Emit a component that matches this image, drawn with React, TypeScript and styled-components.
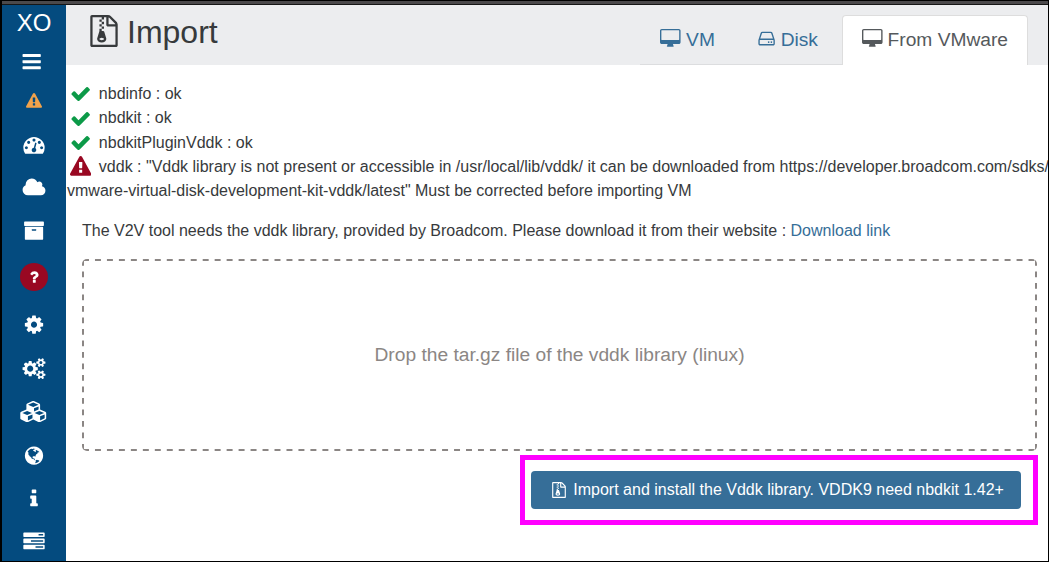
import React from 'react'
import styled, { createGlobalStyle } from 'styled-components'

const GlobalStyle = createGlobalStyle`
  *, *::before, *::after { box-sizing: border-box; }
  html, body { margin: 0; padding: 0; background: #fff; }
  body {
    font-family: "Liberation Sans", Arial, sans-serif;
    font-size: 16px;
    line-height: 24px;
    color: #373a3c;
    overflow: hidden;
  }
`

type Glyph = { w: number; d: string }

const gearSmall =
  'v140q0 16-149 31-12 27-30 52 51 113 51 138 0 4-4 7-122 71-124 71-8 0-46-47t-52-68q-20 2-30 2t-30-2q-14 21-52 68t-46 47q-2 0-124-71-4-3-4-7 0-25 51-138-18-25-30-52-149-15-149-31v-140q0-16 149-31 13-29 30-52-51-113-51-138 0-4 4-7 4-2 35-20t59-34 30-16q8 0 46 46.5t52 67.5q20-2 30-2t30 2q51-71 92-112l6-2q4 0 124 70 4 3 4 7 0 25-51 138 17 23 30 52 149 15 149 31z'

const glyphs: Record<string, Glyph> = {
  bars: {
    w: 1792,
    d: 'M1664 1344v128q0 26-19 45t-45 19h-1408q-26 0-45-19t-19-45v-128q0-26 19-45t45-19h1408q26 0 45 19t19 45zm0-512v128q0 26-19 45t-45 19h-1408q-26 0-45-19t-19-45v-128q0-26 19-45t45-19h1408q26 0 45 19t19 45zm0-512v128q0 26-19 45t-45 19h-1408q-26 0-45-19t-19-45v-128q0-26 19-45t45-19h1408q26 0 45 19t19 45z',
  },
  warning: {
    w: 1792,
    d: 'M1024 1375v-190q0-14-9.5-23.5t-22.5-9.5h-192q-13 0-22.5 9.5t-9.5 23.5v190q0 14 9.5 23.5t22.5 9.5h192q13 0 22.5-9.5t9.5-23.5zm-2-374l18-459q0-12-10-19-13-11-24-11h-220q-11 0-24 11-10 7-10 21l17 457q0 10 10 16.5t24 6.5h185q14 0 23.5-6.5t10.5-16.5zm-14-934l768 1408q35 63-2 126-17 29-46.5 46t-63.5 17h-1536q-34 0-63.5-17t-46.5-46q-37-63-2-126l768-1408q17-31 47-49t65-18 65 18 47 49z',
  },
  dashboard: {
    w: 1792,
    d: 'M384 1152q0-53-37.5-90.5t-90.5-37.5-90.5 37.5-37.5 90.5 37.5 90.5 90.5 37.5 90.5-37.5 37.5-90.5zm192-448q0-53-37.5-90.5t-90.5-37.5-90.5 37.5-37.5 90.5 37.5 90.5 90.5 37.5 90.5-37.5 37.5-90.5zm428 481l101-382q6-26-7.5-48.5t-38.5-29.5-48 6.5-30 39.5l-101 382q-60 5-107 43.5t-63 98.5q-20 77 20 146t117 89 146-20 89-117q16-60-6-117t-72-91zm660-33q0-53-37.5-90.5t-90.5-37.5-90.5 37.5-37.5 90.5 37.5 90.5 90.5 37.5 90.5-37.5 37.5-90.5zm-640-640q0-53-37.5-90.5t-90.5-37.5-90.5 37.5-37.5 90.5 37.5 90.5 90.5 37.5 90.5-37.5 37.5-90.5zm448 192q0-53-37.5-90.5t-90.5-37.5-90.5 37.5-37.5 90.5 37.5 90.5 90.5 37.5 90.5-37.5 37.5-90.5zm320 448q0 261-141 483-19 29-54 29h-1402q-35 0-54-29-141-221-141-483 0-182 71-348t191-286 286-191 348-71 348 71 286 191 191 286 71 348z',
  },
  cloud: {
    w: 1920,
    d: 'M1920 1152q0 159-112.5 271.5t-271.5 112.5h-1088q-185 0-316.5-131.5t-131.5-316.5q0-132 71-241.5t187-163.5q-2-28-2-43 0-212 150-362t362-150q158 0 286.5 88t187.5 230q70-62 166-62 106 0 181 75t75 181q0 75-41 138 129 30 213 134.5t84 239.5z',
  },
  archive: {
    w: 1792,
    d: 'M1088 832q0-26-19-45t-45-19h-256q-26 0-45 19t-19 45 19 45 45 19h256q26 0 45-19t19-45zm576-192v960q0 26-19 45t-45 19h-1408q-26 0-45-19t-19-45v-960q0-26 19-45t45-19h1408q26 0 45 19t19 45zm64-448v256q0 26-19 45t-45 19h-1536q-26 0-45-19t-19-45v-256q0-26 19-45t45-19h1536q26 0 45 19t19 45z',
  },
  question: {
    w: 1792,
    d: 'M1088 1256v240q0 16-12 28t-28 12h-240q-16 0-28-12t-12-28v-240q0-16 12-28t28-12h240q16 0 28 12t12 28zm316-600q0 54-15.5 101t-35 76.5-55 59.5-57.5 43.5-61 35.5q-41 23-68.5 65t-27.5 67q0 17-12 32.5t-28 15.5h-240q-15 0-25.5-18.5t-10.5-37.5v-45q0-83 65-156.5t143-108.5q59-27 84-56t25-76q0-42-46.5-74t-107.5-32q-65 0-108 29-35 25-107 115-13 16-31 16-12 0-25-8l-164-125q-13-10-15.5-25t5.5-28q160-266 464-266 80 0 161 31t146 83 106 127.5 41 158.5z',
  },
  cog: {
    w: 1792,
    d: 'M1152 896q0-106-75-181t-181-75-181 75-75 181 75 181 181 75 181-75 75-181zm512-109v222q0 12-8 23t-20 13l-185 28q-19 54-39 91 35 50 107 138 10 12 10 25t-9 23q-27 37-99 108t-94 71q-12 0-26-9l-138-108q-44 23-91 38-16 136-29 186-7 28-36 28h-222q-14 0-24.5-8.5t-11.5-21.5l-28-184q-49-16-90-37l-141 107q-10 9-25 9-14 0-25-11-126-114-165-168-7-10-7-23 0-12 8-23 15-21 51-66.5t54-70.5q-27-50-41-99l-183-27q-13-2-21-12.5t-8-23.5v-222q0-12 8-23t19-13l186-28q14-46 39-92-40-57-107-138-10-12-10-24 0-10 9-23 26-36 98.5-107.5t94.5-71.5q13 0 26 10l138 107q44-23 91-38 16-136 29-186 7-28 36-28h222q14 0 24.5 8.5t11.5 21.5l28 184q49 16 90 37l142-107q9-9 24-9 13 0 25 10 129 119 165 170 7 8 7 22 0 12-8 23-15 21-51 66.5t-54 70.5q26 50 41 98l183 28q13 2 21 12.5t8 23.5z',
  },
  cogs: {
    w: 1920,
    d:
      'M896 896q0-106-75-181t-181-75-181 75-75 181 75 181 181 75 181-75 75-181zm768 512q0-52-38-90t-90-38-90 38-38 90q0 53 37.5 90.5t90.5 37.5 90.5-37.5 37.5-90.5zm0-1024q0-52-38-90t-90-38-90 38-38 90q0 53 37.5 90.5t90.5 37.5 90.5-37.5 37.5-90.5zm-384 421v185q0 10-7 19.5t-16 10.5l-155 24q-11 35-32 76 34 48 90 115 7 11 7 20 0 12-7 19-23 30-82.5 89.5t-78.5 59.5q-11 0-21-7l-115-90q-37 19-77 31-11 108-23 155-7 24-30 24h-186q-11 0-20-7.5t-10-17.5l-23-153q-34-10-75-31l-118 89q-7 7-20 7-11 0-21-8-144-133-144-160 0-9 7-19 10-14 41-53t47-61q-23-44-35-82l-152-24q-10-1-17-9.5t-7-19.5v-185q0-10 7-19.5t16-10.5l155-24q11-35 32-76-34-48-90-115-7-11-7-20 0-12 7-20 22-30 82-89t79-59q11 0 21 7l115 90q34-18 77-32 11-108 23-154 7-24 30-24h186q11 0 20 7.5t10 17.5l23 153q34 10 75 31l118-89q8-7 20-7 11 0 21 8 144 133 144 160 0 8-7 19-12 16-42 54t-45 60q23 48 34 82l152 23q10 2 17 10.5t7 19.5z' +
      'M1920 1338' + gearSmall + 'M1920 314' + gearSmall,
  },
  cubes: {
    w: 2304,
    d: 'M640 1632l384-192v-314l-384 164v342zm-64-454l404-173-404-173-404 173zm1088 454l384-192v-314l-384 164v342zm-64-454l404-173-404-173-404 173zm-448-293l384-165v-266l-384 164v267zm-64-379l441-189-441-189-441 189zm1088 518v416q0 36-19 67t-52 47l-448 224q-25 14-57 14t-57-14l-448-224q-4-2-7-4-2 2-7 4l-448 224q-25 14-57 14t-57-14l-448-224q-33-16-52-47t-19-67v-416q0-38 21.5-70t56.5-48l434-186v-400q0-38 21.5-70t56.5-48l448-192q23-10 50-10t50 10l448 192q35 16 56.5 48t21.5 70v400l434 186q36 16 57 48t21 70z',
  },
  globe: {
    w: 1792,
    d: 'M896 128q209 0 385.5 103t279.5 279.5 103 385.5-103 385.5-279.5 279.5-385.5 103-385.5-103-279.5-279.5-103-385.5 103-385.5 279.5-279.5 385.5-103zm274 521q-2 1-9.5 9.5t-13.5 9.5q2 0 4.5-5t5-11 3.5-7q6-7 22-15 14-6 52-12 34-8 51 11-2-2 9.5-13t14.5-12q3-2 15-4.5t15-7.5l2-22q-12 1-17.5-7t-6.5-21q0 2-6 8 0-7-4.5-8t-11.5 1-9 1q-10-3-15-7.5t-8-16.5-4-15q-2-5-9.5-11t-9.5-10q-1-2-2.5-5.5t-3-6.5-4-5.5-5.5-2.5-7 5-7.5 10-4.5 5q-3-2-6-1.5t-4.5 1-4.5 3-5 3.5q-3 2-8.5 3t-8.5 2q15-5-1-11-10-4-16-3 9-4 7.5-12t-8.5-14h5q-1-4-8.5-8.5t-17.5-8.5-13-6q-8-5-34-9.5t-33-.5q-5 6-4.5 10.5t4 14 3.5 12.5q1 6-5.5 13t-6.5 12q0 7 14 15.5t10 21.5q-3 8-16 16t-16 12q-5 8-1.5 18.5t10.5 16.5q2 2 1.5 4t-3.5 4.5-5.5 4-6.5 3.5l-3 2q-11 5-20.5-6t-13.5-26q-7-25-16-30-23-8-29 1-5-13-41-26-25-9-58-4 6-1 0-15-7-15-19-12 3-6 4-17.5t1-13.5q3-13 12-23 1-1 7-8.5t9.5-13.5.5-6q35 4 50-11 5-5 11.5-17t10.5-17q9-6 14-5.5t14.5 5.5 14.5 5q14 1 15.5-11t-7.5-20q12 1 3-17-4-7-8-9-12-4-27 5-8 4 2 8-1-1-9.5 10.5t-16.5 17.5-16-5q-1-1-5.5-13.5t-9.5-13.5q-8 0-16 15 3-8-11-15t-24-8q19-12-8-27-7-4-20.5-5t-19.5 4q-5 7-5.5 11.5t5 8 10.5 5.5 11.5 4 8.5 3q14 10 8 14-2 1-8.5 3.5t-11.5 4.5-6 4q-3 4 0 14t-2 14q-5-5-9-17.5t-7-16.5q7 9-25 6l-10-1q-4 0-16 2t-20.5 1-13.5-8q-4-8 0-20 1-4 4-2-4-3-11-9.5t-10-8.5q-46 15-94 41 6 1 12-1 5-2 13-6.5t10-5.5q34-14 42-7l5-5q14 16 20 25-7-4-30-1-20 6-22 12 7 12 5 18-4-3-11.5-10t-14.5-11-15-5q-16 0-22 1-146 80-235 222 7 7 12 8 4 1 5 9t2.5 11 11.5-3q9 8 3 19 1-1 44 27 19 17 21 21 3 11-10 18-1-2-9-9t-9-4q-3 5 .5 18.5t10.5 12.5q-7 0-9.5 16t-2.5 35.5-1 23.5l2 1q-3 12 5.5 34.5t21.5 19.5q-13 3 20 43 6 8 8 9 3 2 12 7.5t15 10 10 10.5q4 5 10 22.5t14 23.5q-2 6 9.5 20t10.5 23q-1 0-2.5 1t-2.5 1q3 7 15.5 14t15.5 13q1 3 2 10t3 11 8 2q2-20-24-62-15-25-17-29-3-5-5.5-15.5t-4.5-14.5q2 0 6 1.5t8.5 3.5 7.5 4 2 3q-3 7 2 17.5t12 18.5 17 19 12 13q6 6 14 19.5t0 13.5q9 0 20 10.5t17 19.5q5 8 8 26t5 24q2 7 8.5 13.5t12.5 9.5l16 8 13 7q5 2 18.5 10.5t21.5 11.5q10 4 16 4t14.5-2.5 13.5-3.5q15-2 29 15t21 21q36 19 55 11-2 1 .5 7.5t8 15.5 9 14.5 5.5 8.5q5 6 18 15t18 15q6-4 7-9-3 8 7 20t18 10q14-3 14-32-31 15-49-18 0-1-2.5-5.5t-4-8.5-2.5-8.5 0-7.5 5-3q9 0 10-3.5t-2-12.5-4-13q-1-8-11-20t-12-15q-5 9-16 8t-16-9q0 1-1.5 5.5t-1.5 6.5q-13 0-15-1 1-3 2.5-17.5t3.5-22.5q1-4 5.5-12t7.5-14.5 4-12.5-4.5-9.5-17.5-2.5q-19 1-26 20-1 3-3 10.5t-5 11.5-9 7q-7 3-24 2t-24-5q-13-8-22.5-29t-9.5-37q0-10 2.5-26.5t3-25-5.5-24.5q3-2 9-9.5t10-10.5q2-1 4.5-1.5t4.5 0 4-1.5 3-6q-1-1-4-3-3-3-4-3 7 3 28.5-1.5t27.5 1.5q15 11 22-2 0-1-2.5-9.5t-.5-13.5q5 27 29 9 3 3 15.5 5t17.5 5q3 2 7 5.5t5.5 4.5 5-.5 8.5-6.5q10 14 12 24 11 40 19 44 7 3 11 2t4.5-9.5 0-14-1.5-12.5l-1-8v-18l-1-8q-15-3-18.5-12t1.5-18.5 15-18.5q1-1 8-3.5t15.5-6.5 12.5-8q21-19 15-35 7 0 11-9-1 0-5-3t-7.5-5-4.5-2q9-5 2-16 5-3 7.5-11t7.5-10q9 12 21 2 8-8 1-16 5-7 20.5-10.5t18.5-9.5q7 2 8-2t1-12 3-12q4-5 15-9t13-5l17-11q3-4 0-4 18 2 31-11 10-11-6-20 3-6-3-9.5t-15-5.5q3-1 11.5-.5t10.5-1.5q15-10-7-16-17-5-43 12zm-163 877q206-36 351-189-3-3-12.5-4.5t-12.5-3.5q-18-7-24-8 1-7-2.5-13t-8-9-12.5-8-11-7q-2-2-7-6t-7-5.5-7.5-4.5-8.5-2-10 1l-3 1q-3 1-5.5 2.5t-5.5 3-4 3 0 2.5q-21-17-36-22-5-1-11-5.5t-10.5-7-10-1.5-11.5 7q-5 5-6 15t-2 13q-7-5 0-17.5t2-18.5q-3-6-10.5-4.5t-12 4.5-11.5 8.5-9 6.5-8.5 5.5-8.5 7.5q-3 4-6 12t-5 11q-2-4-11.5-6.5t-9.5-5.5q2 10 4 35t5 38q7 31-12 48-27 25-29 40-4 22 12 26 0 7-8 20.5t-7 21.5q0 6 2 16z',
  },
  info: {
    w: 1792,
    d: 'M1216 1344v128q0 26-19 45t-45 19h-512q-26 0-45-19t-19-45v-128q0-26 19-45t45-19h64v-384h-64q-26 0-45-19t-19-45v-128q0-26 19-45t45-19h384q26 0 45 19t19 45v576h64q26 0 45 19t19 45zm-128-1152v192q0 26-19 45t-45 19h-256q-26 0-45-19t-19-45v-192q0-26 19-45t45-19h256q26 0 45 19t19 45z',
  },
  tasks: {
    w: 1792,
    d: 'M1024 1408h640v-128h-640v128zm-384-512h1024v-128h-1024v128zm640-512h384v-128h-384v128zm512 832v256q0 26-19 45t-45 19h-1664q-26 0-45-19t-19-45v-256q0-26 19-45t45-19h1664q26 0 45 19t19 45zm0-512v256q0 26-19 45t-45 19h-1664q-26 0-45-19t-19-45v-256q0-26 19-45t45-19h1664q26 0 45 19t19 45zm0-512v256q0 26-19 45t-45 19h-1664q-26 0-45-19t-19-45v-256q0-26 19-45t45-19h1664q26 0 45 19t19 45z',
  },
  check: {
    w: 1792,
    d: 'M1671 566q0 40-28 68l-724 724-136 136q-28 28-68 28t-68-28l-136-136-362-362q-28-28-28-68t28-68l136-136q28-28 68-28t68 28l294 295 656-657q28-28 68-28t68 28l136 136q28 28 28 68z',
  },
  archiveFile: {
    w: 1792,
    d: 'M768 384v-128h-128v128h128zm128 128v-128h-128v128h128zm-128 128v-128h-128v128h128zm128 128v-128h-128v128h128zm700-388q28 28 48 76t20 88v1152q0 40-28 68t-68 28h-1344q-40 0-68-28t-28-68v-1600q0-40 28-68t68-28h896q40 0 88 20t76 48zm-444-244v376h376q-10-29-22-41l-313-313q-12-12-41-22zm384 1528v-1024h-416q-40 0-68-28t-28-68v-416h-128v128h-128v-128h-512v1536h1280zm-627-721l107 349q8 27 8 52 0 83-72.5 137.5t-183.5 54.5-183.5-54.5-72.5-137.5q0-25 8-52 21-63 120-396v-128h128v128h79q22 0 39 13t23 34zm-141 465q53 0 90.5-19t37.5-45-37.5-45-90.5-19-90.5 19-37.5 45 37.5 45 90.5 19z',
  },
  desktop: {
    w: 1920,
    d: 'M1792 992v-832q0-13-9.5-22.5t-22.5-9.5h-1600q-13 0-22.5 9.5t-9.5 22.5v832q0 13 9.5 22.5t22.5 9.5h1600q13 0 22.5-9.5t9.5-22.5zm128-832v1088q0 66-47 113t-113 47h-544q0 37 16 77.5t32 71 16 43.5q0 26-19 45t-45 19h-512q-26 0-45-19t-19-45q0-14 16-44t32-70 16-78h-544q-66 0-113-47t-47-113v-1088q0-66 47-113t113-47h1600q66 0 113 47t47 113z',
  },
  disk: {
    w: 1792,
    d: 'M1168 1216q0 33-23.5 56.5t-56.5 23.5-56.5-23.5-23.5-56.5 23.5-56.5 56.5-23.5 56.5 23.5 23.5 56.5zm256 0q0 33-23.5 56.5t-56.5 23.5-56.5-23.5-23.5-56.5 23.5-56.5 56.5-23.5 56.5 23.5 23.5 56.5zm112 160v-320q0-13-9.5-22.5t-22.5-9.5h-1216q-13 0-22.5 9.5t-9.5 22.5v320q0 13 9.5 22.5t22.5 9.5h1216q13 0 22.5-9.5t9.5-22.5zm-1230-480h1180l-157-482q-4-13-16-21.5t-26-8.5h-782q-14 0-26 8.5t-16 21.5zm1358 160v320q0 66-47 113t-113 47h-1216q-66 0-113-47t-47-113v-320q0-25 16-75l197-606q17-53 63-86t101-33h782q55 0 101 33t63 86l197 606q16 50 16 75z',
  },
}

const Svg = styled.svg<{ $color?: string }>`
  display: block;
  flex: none;
  fill: ${p => p.$color ?? 'currentColor'};
`

function Icon({ name, size, color, width }: { name: string; size: number; color?: string; width?: number }) {
  const g = glyphs[name]
  return (
    <Svg viewBox={`0 0 ${g.w} 1792`} width={width ?? (size * g.w) / 1792} height={size} $color={color} aria-hidden>
      <path d={g.d} />
    </Svg>
  )
}

const Window = styled.div`
  display: flex;
  flex-direction: column;
  width: 1049px;
  height: 562px;
  overflow: hidden;
  border: solid #000;
  border-width: 1px 1px 1px 2px;
`

const TopStrip = styled.div`
  flex: none;
  height: 4px;
  background: #4b494b;
  border-bottom: 1px solid #161616;
`

const Columns = styled.div`
  display: flex;
  flex: 1;
  min-height: 0;
`

const Sidebar = styled.nav`
  display: flex;
  flex-direction: column;
  align-items: center;
  flex: none;
  width: 64px;
  background: #044b7f;
  color: #fff;
`

const Brand = styled.a`
  height: 36px;
  font-size: 24px;
  line-height: 36px;
`

const MenuToggle = styled.div`
  margin: 10px 5px 0 0;
`

const MenuItem = styled.div<{ $gap: number }>`
  flex: none;
  margin-top: ${p => p.$gap}px;
`

const HelpBadge = styled.div`
  display: flex;
  align-items: center;
  justify-content: center;
  width: 28px;
  height: 28px;
  border-radius: 50%;
  background: #990822;
`

const Main = styled.main`
  flex: 1;
  min-width: 0;
  overflow: hidden;
`

const Header = styled.header`
  display: flex;
  justify-content: space-between;
  height: 60px;
  padding: 10px 20px 0 22px;
  background: #ecedef;
`

const Title = styled.h1`
  display: flex;
  align-items: flex-start;
  gap: 7px;
  margin: 0;
  font-size: 32px;
  font-weight: 400;
  line-height: 34px;
`

const Tabs = styled.div`
  display: flex;
  height: 50px;
  border-bottom: 1px solid #dcdddf;
`

const Tab = styled.a<{ $active?: boolean; $pad: string; $gap?: number }>`
  display: flex;
  align-items: flex-start;
  gap: ${p => p.$gap ?? 5}px;
  height: 50px;
  padding: ${p => p.$pad};
  font-size: 19.2px;
  line-height: 29px;
  color: ${p => (p.$active ? '#55595c' : '#366e98')};
  ${p =>
    p.$active &&
    `background: #fff; border: 1px solid #ddd; border-bottom: 0; border-radius: 4px 4px 0 0;`}
`

const TabIcon = styled.span<{ $top: number }>`
  padding-top: ${p => p.$top}px;
`

const Checks = styled.div`
  padding: 16.6px 0 0 1px;
  white-space: nowrap;
`

const CheckRow = styled.div<{ $height: number }>`
  display: flex;
  align-items: center;
  height: ${p => p.$height}px;
`

const StatusIcon = styled.span`
  display: flex;
  flex: none;
  justify-content: center;
  width: 27.4px;
  margin-right: 4.45px;
`

const Body = styled.section`
  padding: 15.4px 11px 0 16px;
`

const Hint = styled.p`
  margin: 0 0 16.8px;
`

const Link = styled.a`
  color: #366e98;
`

const dashesX = 'linear-gradient(90deg, #8b8684 6px, transparent 6px)'
const dashesY = 'linear-gradient(180deg, #8b8684 6px, transparent 6px)'

const DropZone = styled.div`
  display: flex;
  align-items: center;
  justify-content: center;
  height: 192px;
  border-radius: 5px;
  background-image: ${dashesX}, ${dashesX}, ${dashesY}, ${dashesY};
  background-size: 11.98px 2px, 11.98px 2px, 2px 11.5px, 2px 11.5px;
  background-position: 1px 0, 1px 100%, 0 1px, 100% 1px;
  background-repeat: repeat-x, repeat-x, repeat-y, repeat-y;
  font-size: 19.2px;
  color: #8b8684;
`

const Actions = styled.div`
  display: flex;
  justify-content: flex-end;
  margin: 4px -1px 0 0;
`

const Highlight = styled.div`
  padding: 11px 12px 11px 6px;
  border: 5px solid #ff00ff;
`

const Button = styled.button`
  display: flex;
  align-items: center;
  gap: 6.3px;
  width: 490px;
  height: 38px;
  padding: 0 0 0 20px;
  border: 0;
  border-radius: 4px;
  background: #366e98;
  color: #fff;
  font: inherit;
  white-space: nowrap;
`

const menu: [string, number][] = [
  ['dashboard', 25],
  ['cloud', 21.2],
  ['archive', 22.6],
]

const lowerMenu: [string, number][] = [
  ['cog', 23.3],
  ['cogs', 22],
  ['cubes', 21.7],
  ['globe', 22.4],
  ['info', 21.7],
  ['tasks', 21.7],
]

export default function App() {
  return (
    <>
      <GlobalStyle />
      <Window>
        <TopStrip />
        <Columns>
          <Sidebar>
            <Brand>XO</Brand>
            <MenuToggle>
              <Icon name="bars" size={21.33} />
            </MenuToggle>
            <MenuItem $gap={20.7}>
              <Icon name="warning" size={16} color="#f0a24b" />
            </MenuItem>
            {menu.map(([name, gap]) => (
              <MenuItem key={name} $gap={gap}>
                <Icon name={name} size={21.33} width={28} />
              </MenuItem>
            ))}
            <MenuItem $gap={21.4}>
              <HelpBadge>
                <Icon name="question" size={16} />
              </HelpBadge>
            </MenuItem>
            {lowerMenu.map(([name, gap]) => (
              <MenuItem key={name} $gap={gap}>
                <Icon name={name} size={21.33} width={28} />
              </MenuItem>
            ))}
          </Sidebar>
          <Main>
            <Header>
              <Title>
                <Icon name="archiveFile" size={32} />
                Import
              </Title>
              <Tabs>
                <Tab $pad="10px 20px 0 20px" $gap={5.6}>
                  <TabIcon $top={4}>
                    <Icon name="desktop" size={19.2} />
                  </TabIcon>
                  VM
                </Tab>
                <Tab $pad="10px 24px 0 22.6px" $gap={4}>
                  <TabIcon $top={4}>
                    <Icon name="disk" size={19.2} />
                  </TabIcon>
                  Disk
                </Tab>
                <Tab $active $pad="9px 19px 0 19px">
                  <TabIcon $top={4}>
                    <Icon name="desktop" size={19.2} />
                  </TabIcon>
                  From VMware
                </Tab>
              </Tabs>
            </Header>
            <Checks>
              {['nbdinfo', 'nbdkit', 'nbdkitPluginVddk'].map(name => (
                <CheckRow key={name} $height={24.4}>
                  <StatusIcon>
                    <Icon name="check" size={21.33} color="#0c9a48" />
                  </StatusIcon>
                  {name} : ok
                </CheckRow>
              ))}
              <CheckRow $height={24.4}>
                <StatusIcon>
                  <Icon name="warning" size={21.33} color="#990822" />
                </StatusIcon>
                vddk : "Vddk library is not present or accessible in /usr/local/lib/vddk/ it can be downloaded from
                https://developer.broadcom.com/sdks/
              </CheckRow>
              <CheckRow $height={24}>
                vmware-virtual-disk-development-kit-vddk/latest" Must be corrected before importing VM
              </CheckRow>
            </Checks>
            <Body>
              <Hint>
                The V2V tool needs the vddk library, provided by Broadcom. Please download it from their website :{' '}
                <Link>Download link</Link>
              </Hint>
              <DropZone>Drop the tar.gz file of the vddk library (linux)</DropZone>
              <Actions>
                <Highlight>
                  <Button>
                    <Icon name="archiveFile" size={16} />
                    Import and install the Vddk library. VDDK9 need nbdkit 1.42+
                  </Button>
                </Highlight>
              </Actions>
            </Body>
          </Main>
        </Columns>
      </Window>
    </>
  )
}
